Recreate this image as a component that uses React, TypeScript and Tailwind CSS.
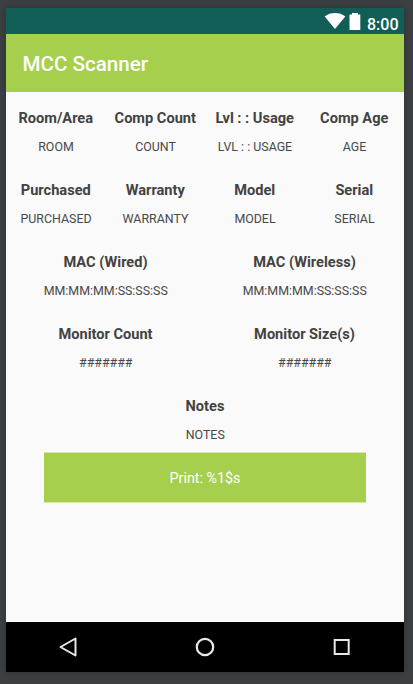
type FieldProps = { label: string; value: string };

const rows: FieldProps[][] = [
  [
    { label: "Room/Area", value: "ROOM" },
    { label: "Comp Count", value: "COUNT" },
    { label: "Lvl : : Usage", value: "LVL : : USAGE" },
    { label: "Comp Age", value: "AGE" },
  ],
  [
    { label: "Purchased", value: "PURCHASED" },
    { label: "Warranty", value: "WARRANTY" },
    { label: "Model", value: "MODEL" },
    { label: "Serial", value: "SERIAL" },
  ],
  [
    { label: "MAC (Wired)", value: "MM:MM:MM:SS:SS:SS" },
    { label: "MAC (Wireless)", value: "MM:MM:MM:SS:SS:SS" },
  ],
  [
    { label: "Monitor Count", value: "#######" },
    { label: "Monitor Size(s)", value: "#######" },
  ],
  [{ label: "Notes", value: "NOTES" }],
];

function Field({ label, value }: FieldProps) {
  return (
    <div className="flex min-w-0 flex-1 flex-col items-center whitespace-nowrap">
      <div className="text-[14.6px] leading-[20px] font-bold text-[#424242]">{label}</div>
      <div className="mt-[10px] pl-[0.5px] text-[12.4px] leading-[18px] text-[#484848]">{value}</div>
    </div>
  );
}

function StatusBar() {
  return (
    <div className="flex h-[26px] items-start justify-end bg-[#115e56] pr-[5.500px] text-white">
      <svg className="mt-[4px]" width="22" height="18" viewBox="0 0 22 18" fill="currentColor">
        <path d="M0.7 4.4C6.5-.1 15.5-.1 21.300 4.400L11 17Z" />
      </svg>
      <svg className="mt-[4px] ml-[3px]" width="12" height="18" viewBox="0 0 12 18" fill="currentColor">
        <path d="M3 1h6v1.500h2.300V18H.5V2.500H3Z" />
      </svg>
      <span className="mt-[7px] ml-[6px] text-[16px] leading-[20px] font-medium">8:00</span>
    </div>
  );
}

function NavBar() {
  return (
    <div className="flex h-[50px] items-center bg-black text-[#e8e8e8]">
      <svg className="ml-[50px]" width="24" height="24" viewBox="0 0 24 24" fill="none" stroke="currentColor" strokeWidth="2">
        <path d="M4.500 12 19.500 3.500v17Z" strokeLinejoin="round" />
      </svg>
      <svg className="ml-[113px]" width="24" height="24" viewBox="0 0 24 24" fill="none" stroke="currentColor" strokeWidth="2.200">
        <circle cx="12" cy="12" r="8.200" />
      </svg>
      <svg className="ml-[113px]" width="24" height="24" viewBox="0 0 24 24" fill="none" stroke="currentColor" strokeWidth="2">
        <path d="M4.700 5h14v14h-14Z" />
      </svg>
    </div>
  );
}

export default function App() {
  return (
    <div className="h-[684px] w-[413px] bg-[#3c4042] px-[6px] py-[8px] font-['Roboto',sans-serif]">
      <div className="flex h-[664px] w-[398px] flex-col bg-[#fafafa] shadow-[0_0_7px_rgba(0,0,0,0.25)]">
        <StatusBar />
        <header className="flex h-[58px] items-center bg-[#a5cf4d] pl-[16.500px] text-[20.6px] font-medium text-white">
          <h1 className="pt-[2px]">MCC Scanner</h1>
        </header>
        <main className="flex flex-1 flex-col pt-[16px]">
          {rows.map((fields, i) => (
            <div key={i} className="flex h-[72px]">
              {fields.map((field) => (
                <Field key={field.label} {...field} />
              ))}
            </div>
          ))}
          <button className="-mt-[16px] ml-[38px] h-[51px] w-[322px] border-y border-[#d5e8ab] bg-[#a5cf4d] pt-[3px] text-[14.3px] text-white">
            Print: %1$s
          </button>
        </main>
        <NavBar />
      </div>
    </div>
  );
}
